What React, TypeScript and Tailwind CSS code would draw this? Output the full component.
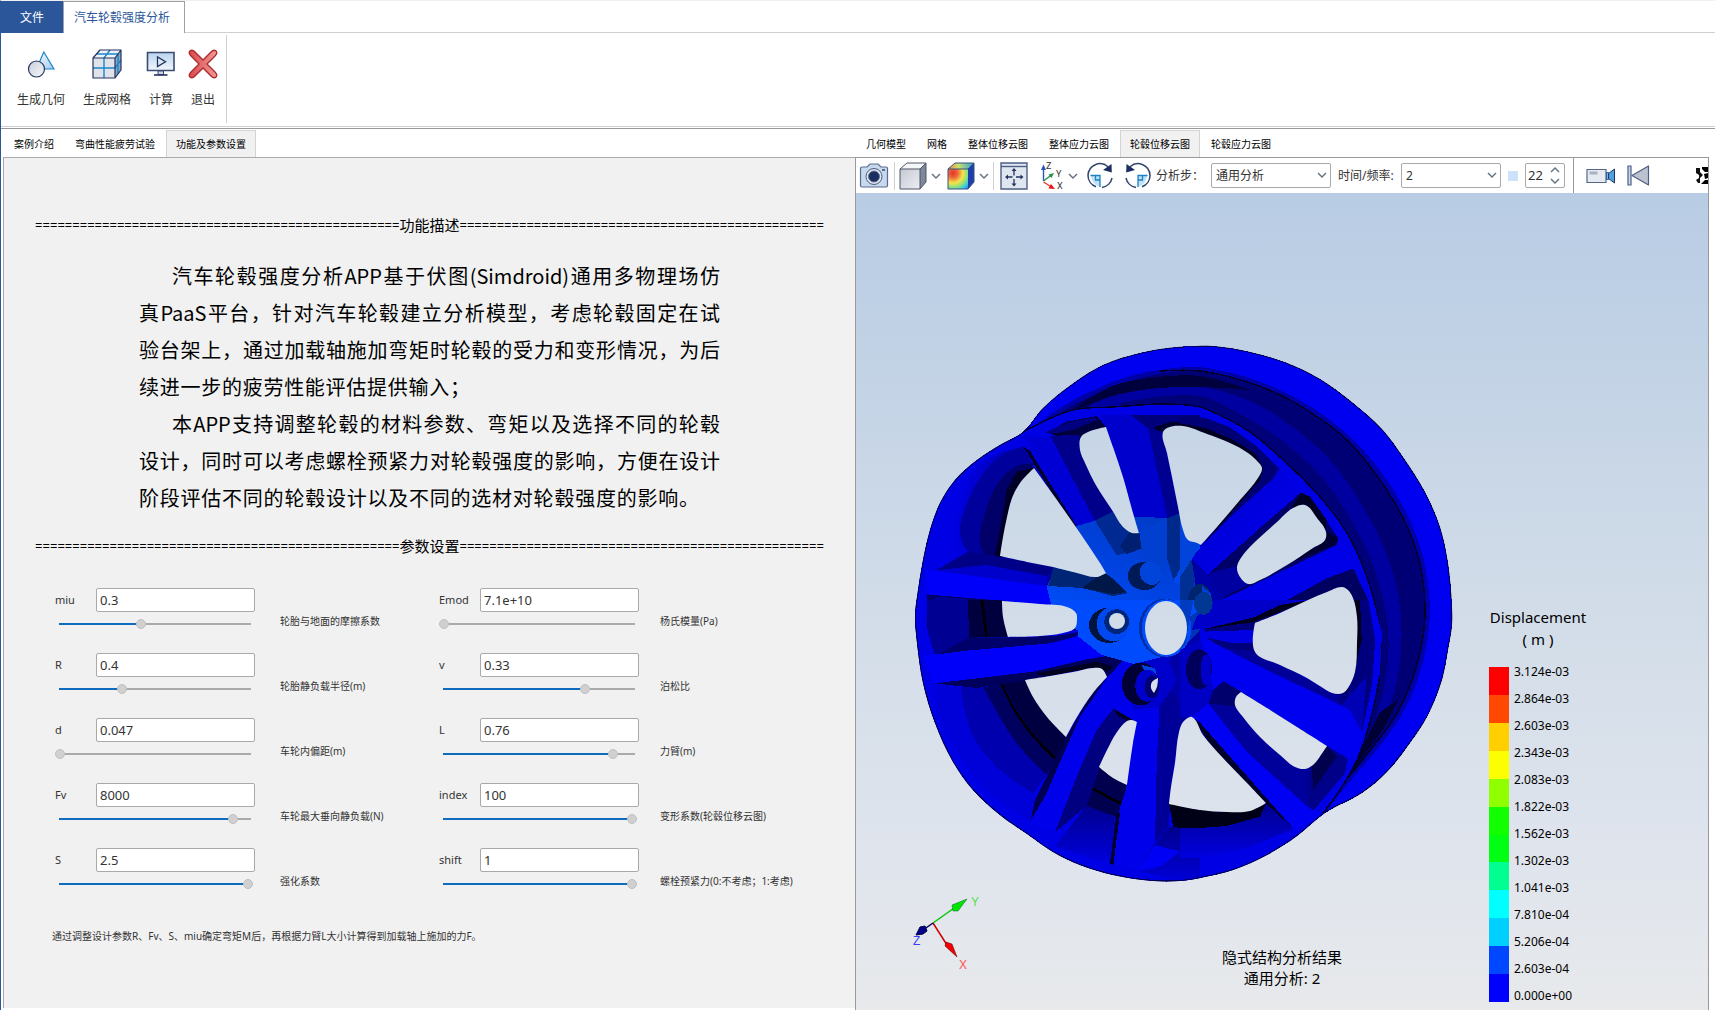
import { useState, type ReactNode } from "react";

/* ---------- ribbon icons ---------- */

function GeometryIcon() {
  return (
    <svg width="28" height="28" viewBox="0 0 28 28" aria-hidden="true">
      <defs>
        <linearGradient id="geo-tri" x1="0" y1="0" x2="1" y2="1">
          <stop offset="0" stopColor="#ffffff" />
          <stop offset="1" stopColor="#9ecbf0" />
        </linearGradient>
        <linearGradient id="geo-circle" x1="0" y1="0" x2="1" y2="1">
          <stop offset="0" stopColor="#c9ced8" />
          <stop offset="1" stopColor="#f6f7fa" />
        </linearGradient>
      </defs>
      <path d="M16.8 2 27 19H9.500Z" fill="url(#geo-tri)" stroke="#1b82c6" strokeWidth="1.2" />
      <circle cx="9.500" cy="19" r="8" fill="url(#geo-circle)" stroke="#25345e" strokeWidth="1.200" />
    </svg>
  );
}

function MeshIcon() {
  return (
    <svg width="30" height="30" viewBox="0 0 30 30" aria-hidden="true">
      <path d="M1 9 8 1h21l-6 8Z" fill="#eef3f9" />
      <path d="m23 9 6-8v20l-6 8Z" fill="#8aa4c4" />
      <path d="M1 9h22v20H1Z" fill="#dfe2e8" />
      <path d="M12 29V9l6-8M1 19h22l6-8M4.500 5H26M26 5v20" fill="none" stroke="#1b86cc" strokeWidth="1.400" />
      <path d="M1 9 8 1h21v20l-6 8H1Z M1 9h22v20M23 9l6-8" fill="none" stroke="#25345e" strokeWidth="1.200" strokeLinejoin="round" />
    </svg>
  );
}

function ComputeIcon() {
  return (
    <svg width="30" height="26" viewBox="0 0 30 26" aria-hidden="true">
      <defs>
        <linearGradient id="screen" x1="0" y1="0" x2="0" y2="1">
          <stop offset="0" stopColor="#b9d3ee" />
          <stop offset="1" stopColor="#f2f7fc" />
        </linearGradient>
      </defs>
      <path d="M1.500 1.500h26.500v18H1.500Z" fill="url(#screen)" stroke="#3a4a72" strokeWidth="1.600" />
      <path d="M12 20h5.500v3.500H12Z" fill="#c9d3e2" stroke="#3a4a72" />
      <path d="M8 24h13.500" stroke="#25345e" strokeWidth="1.600" />
      <path d="M11.500 6v9.500l8-4.700Z" fill="#dbeafa" stroke="#25345e" strokeWidth="1.300" />
    </svg>
  );
}

function ExitIcon() {
  return (
    <svg width="30" height="30" viewBox="0 0 30 30" aria-hidden="true">
      <defs>
        <linearGradient id="cross" x1="0" y1="0" x2="1" y2="0">
          <stop offset="0" stopColor="#d84a4c" />
          <stop offset="1" stopColor="#f19a98" />
        </linearGradient>
      </defs>
      <path
        d="M2 2Q4 0 7 3L15 11 23 3Q26 0 28 2T27 7L19 15 27 23Q30 26 28 28T23 27L15 19 7 27Q4 30 2 28T3 23L11 15 3 7Q0 4 2 2Z"
        fill="url(#cross)"
        stroke="#b0282d"
        strokeWidth="1.300"
      />
    </svg>
  );
}

/* ---------- viewer toolbar icons ---------- */

function CameraIcon() {
  return (
    <svg width="30" height="26" viewBox="0 0 30 26" aria-hidden="true">
      <path d="M1.500 5.500Q1.500 4 3 4h5l3-3h8l3 3h5q1.500 0 1.500 1.500v17q0 1.500-1.500 1.500H3q-1.500 0-1.500-1.500Z" fill="#c6d9ef" stroke="#5a6c8e" strokeWidth="1.200" />
      <circle cx="15" cy="13.500" r="8" fill="#e3e8ef" stroke="#4a5a7e" />
      <circle cx="15" cy="13.500" r="5.500" fill="#1a2f5f" stroke="#5c7294" />
      <path d="M23 7h3" stroke="#33476f" strokeWidth="1.500" />
    </svg>
  );
}

function CubeIcon() {
  return (
    <svg width="28" height="28" viewBox="0 0 28 28" aria-hidden="true">
      <defs>
        <linearGradient id="cube-face" x1="0" y1="0" x2="1" y2="1">
          <stop offset="0" stopColor="#c5c9d1" />
          <stop offset="1" stopColor="#eceef2" />
        </linearGradient>
      </defs>
      <path d="m1 7 7-6h19l-6 6Z" fill="#f5f6f8" />
      <path d="m21 7 6-6v19l-6 7Z" fill="#7f8899" />
      <path d="M1 7h20v20H1Z" fill="url(#cube-face)" />
      <path d="m1 7 7-6h19v19l-6 7H1Zh20v20M21 7l6-6" fill="none" stroke="#4c5568" strokeLinejoin="round" />
    </svg>
  );
}

function ContourCubeIcon() {
  return (
    <svg width="28" height="28" viewBox="0 0 28 28" aria-hidden="true">
      <defs>
        <radialGradient id="contour" gradientUnits="userSpaceOnUse" cx="6" cy="11" r="22">
          <stop offset="0" stopColor="#e0332c" />
          <stop offset="0.22" stopColor="#ee6a3a" />
          <stop offset="0.45" stopColor="#f7e24a" />
          <stop offset="0.65" stopColor="#8fe27a" />
          <stop offset="0.82" stopColor="#35c9e8" />
          <stop offset="1" stopColor="#2a74e0" />
        </radialGradient>
        <linearGradient id="contour-top" x1="0" y1="0" x2="1" y2="0">
          <stop offset="0" stopColor="#e8863e" />
          <stop offset="0.4" stopColor="#c9e26a" />
          <stop offset="1" stopColor="#2a9be0" />
        </linearGradient>
      </defs>
      <path d="m1 7 7-6h19l-6 6Z" fill="url(#contour-top)" />
      <path d="m21 7 6-6v19l-6 7Z" fill="#1d3fae" />
      <path d="M1 7h20v20H1Z" fill="url(#contour)" />
      <path d="m1 7 7-6h19v19l-6 7H1Zh20M21 7l6-6" fill="none" stroke="#39507e" strokeLinejoin="round" />
    </svg>
  );
}

function FitIcon() {
  return (
    <svg width="28" height="28" viewBox="0 0 28 28" aria-hidden="true">
      <path d="M1 1h26v26H1Z" fill="#dfe6f0" stroke="#4d5f85" strokeWidth="1.400" />
      <path d="M1 4.500h26" stroke="#4d5f85" strokeWidth="1.400" />
      <path d="M14 13.500V8M14 17v6M12.500 15H7M16 15h6" stroke="#25345e" strokeWidth="1.300" />
      <path d="m14 6-2.500 3h5ZM14 24.500 11.500 21.500h5ZM5 15l3-2.500v5ZM23.500 15l-3-2.500v5Z" fill="#25345e" />
    </svg>
  );
}

function AxesIcon() {
  return (
    <svg width="24" height="28" viewBox="0 0 24 28" aria-hidden="true" fontFamily="Roboto, sans-serif" fontSize="9">
      <path d="M3.500 19V6" stroke="#2a56b8" strokeWidth="1.400" />
      <path d="M3.500 2.500 1 8h5Z" fill="#2a56b8" />
      <path d="m3.500 19 8-6" stroke="#2a9048" strokeWidth="1.400" />
      <path d="m14 11-5.500 1.500 3 3.500Z" fill="#2a9048" />
      <path d="m3.500 20 8 5" stroke="#e33" strokeWidth="1.400" />
      <path d="m15 27-6.500-.5 2.500-4.500Z" fill="#e11" />
      <text x="6" y="7" fill="#333">Z</text>
      <text x="16" y="15" fill="#333">Y</text>
      <text x="17" y="27" fill="#333">X</text>
    </svg>
  );
}

function RotateIcon({ flipped = false }: { flipped?: boolean }) {
  return (
    <svg width="28" height="28" viewBox="0 0 28 28" aria-hidden="true" className={flipped ? "-scale-x-100" : ""}>
      <path d="M5 13.500h9V25A12 12 0 0 1 5 13.500Z" fill="#bfe2f8" />
      <path d="M4.500 13.500H14V25" fill="none" stroke="#1b82c6" strokeWidth="1.300" />
      <path d="M9.500 13.500V18H14" fill="none" stroke="#1b82c6" strokeWidth="1.300" />
      <path d="M22 4.800A12 12 0 0 0 2 13.500a12 12 0 0 0 8 11.300M16 25.500a12 12 0 0 0 10-9.500" fill="none" stroke="#33456f" strokeWidth="1.500" />
      <path d="m25.500 2 .3 8.500-8.800-2.500Z" fill="#1a2f5f" />
    </svg>
  );
}

function RecordIcon() {
  return (
    <svg width="30" height="18" viewBox="0 0 30 18" aria-hidden="true">
      <path d="M1 2.500h19v13H1Z" fill="#e6eaf1" stroke="#55668c" strokeWidth="1.200" />
      <path d="M3.500 4.500h8v3h-8Z" fill="#a9b2c3" />
      <path d="M20.500 5.500h2v7h-2Z" fill="#7fb7e4" stroke="#3a5e98" />
      <path d="M22.500 6.500 28.500 2v14l-6-4.500Z" fill="#4da3e0" stroke="#25345e" />
    </svg>
  );
}

function FirstFrameIcon() {
  return (
    <svg width="23" height="21" viewBox="0 0 23 21" aria-hidden="true">
      <path d="M1 1h3v19H1Z" fill="#c4d8ee" stroke="#4f5f80" strokeWidth="1.200" />
      <path d="M21.500 1v19L5 10.500Z" fill="#bcc2cf" stroke="#4f5f80" strokeWidth="1.200" strokeLinejoin="round" />
    </svg>
  );
}

function Chevron({ up = false }: { up?: boolean }) {
  return (
    <svg width="10" height="6" viewBox="0 0 10 6" aria-hidden="true" className={up ? "rotate-180" : ""}>
      <path d="m1 1 4 4 4-4" fill="none" stroke="#62707c" strokeWidth="1.400" />
    </svg>
  );
}

/* ---------- wheel model ---------- */

/** Turns a list of "x y" pairs into a curve that keeps sharp corners sharp. */
function smooth(list: string, closed = true) {
  const n = list.trim().split(/\s+/).map(Number);
  const pts: [number, number][] = [];
  for (let i = 0; i + 1 < n.length; i += 2) pts.push([n[i], n[i + 1]]);
  const count = pts.length;
  const tangents = pts.map((p, i): [number, number] => {
    if (!closed && (i === 0 || i === count - 1)) return [0, 0];
    const a = pts[(i - 1 + count) % count];
    const b = pts[(i + 1) % count];
    const inLen = Math.hypot(p[0] - a[0], p[1] - a[1]) || 1;
    const outLen = Math.hypot(b[0] - p[0], b[1] - p[1]) || 1;
    const u = [(p[0] - a[0]) / inLen, (p[1] - a[1]) / inLen];
    const v = [(b[0] - p[0]) / outLen, (b[1] - p[1]) / outLen];
    if (u[0] * v[0] + u[1] * v[1] < 0.45) return [0, 0];
    const s = Math.hypot(u[0] + v[0], u[1] + v[1]);
    return [(u[0] + v[0]) / s, (u[1] + v[1]) / s];
  });
  let d = `M${pts[0][0]} ${pts[0][1]}`;
  for (let i = 0; i < (closed ? count : count - 1); i++) {
    const j = (i + 1) % count;
    const [p, q, s, t] = [pts[i], pts[j], tangents[i], tangents[j]];
    const k = Math.hypot(q[0] - p[0], q[1] - p[1]) / 3;
    d += `C${p[0] + s[0] * k} ${p[1] + s[1] * k} ${q[0] - t[0] * k} ${q[1] - t[1] * k} ${q[0]} ${q[1]}`;
  }
  return closed ? `${d}Z` : d;
}

const HOLES = [
  "1034 468 1020 483 1012 498 1007 517 1003 537 1000 556 1027 562 1053 567 1077 573 1097 577 1106 573 1100 563 1080 533 1057 500",
  "1106 427 1088 432 1081 437 1080 450 1085 463 1097 487 1112 510 1123 527 1132 533 1139 533 1133 513 1123 477 1113 447",
  "1163 432 1167 428 1183 426 1207 434 1230 443 1248 453 1258 462 1262 468 1258 478 1240 500 1217 527 1201 545 1197 543 1188 540 1183 530 1178 507 1172 477 1167 453",
  "1305 505 1293 508 1277 522 1257 540 1243 555 1237 567 1240 577 1248 584 1260 580 1287 565 1313 548 1325 540 1326 532 1317 518",
  "1342 587 1327 592 1308 600 1280 613 1255 623 1255 652 1280 665 1307 678 1323 688 1332 693 1343 693 1348 688 1355 672 1357 643 1357 617 1353 598 1348 590",
  "1241 692 1236 697 1235 705 1243 717 1260 737 1280 755 1295 767 1305 769 1313 765 1323 752 1327 746 1297 727 1267 708",
  "1190 717 1183 722 1179 732 1175 763 1171 787 1169 804 1200 810 1227 812 1250 811 1266 803 1247 783 1223 758 1203 735 1192 717",
  "1137 722 1132 720 1127 721 1117 732 1107 750 1099 767 1113 778 1127 785 1133 743",
  "1025 680 1033 697 1047 717 1066 737 1077 717 1093 693 1107 677 1102 669 1093 668 1073 672 1050 676",
  "1002 601 1003 617 1008 637 1040 636 1063 633 1075 628 1077 620 1076 613 1067 607 1040 604",
  "1152 682 1158 678 1157 687 1154 693 1151 688",
].map((list) => smooth(list));

const SILHOUETTE = smooth(
  "1023 432 1043 408 1075 382 1103 365 1140 353 1177 347 1213 346 1250 352 1287 363 1320 379 1353 403 1382 429 1403 457 1425 492 1440 527 1448 563 1452 607 1452 625 1448 650 1442 680 1427 717 1410 743 1387 772 1362 793 1325 813 1297 836 1267 855 1233 870 1200 878 1180 881 1153 881 1113 875 1080 865 1053 852 1027 834 1000 815 973 790 953 762 935 723 923 683 917 643 915 615 917 597 923 560 930 530 940 503 955 480 977 460 1000 445",
);

const FRONT_EDGE =
  "1023 432 1073 410 1113 407 1167 404 1200 407 1213 412 1247 430 1280 457 1320 497 1347 533 1367 577 1379 623 1381 660 1373 710 1357 760 1340 790 1323 813";

const P = ({ d, f }: { d: string; f: string }) => <path d={d} fill={f} />;
const Band = ({ pts, f }: { pts: string; f: string }) => <path d={smooth(pts)} fill={f} />;

function Wheel() {
  return (
    <svg
      className="absolute inset-0 h-full w-full"
      viewBox="856 193 852 817"
      preserveAspectRatio="xMidYMid meet"
      role="img"
      aria-label="轮毂位移云图"
    >
      <defs>
        <mask id="openings" maskUnits="userSpaceOnUse" x="900" y="330" width="570" height="570">
          <rect x="900" y="330" width="570" height="570" fill="white" />
          {HOLES.map((d) => (
            <path key={d} d={d} fill="black" />
          ))}
          <ellipse cx="1166" cy="628" rx="21" ry="27" fill="black" />
          <circle cx="1117" cy="621" r="8" fill="black" />
        </mask>
        <clipPath id="outline">
          <path d={SILHOUETTE} />
        </clipPath>
        <linearGradient id="wall-left" x1="0" y1="0" x2="1" y2="0">
          <stop offset="0" stopColor="#0000ec" />
          <stop offset="0.6" stopColor="#0000aa" />
          <stop offset="1" stopColor="#000080" />
        </linearGradient>
        <linearGradient id="wall-bottom" x1="0" y1="0" x2="0" y2="1">
          <stop offset="0" stopColor="#00008c" />
          <stop offset="1" stopColor="#0000e0" />
        </linearGradient>
        <linearGradient id="spoke-shade" x1="0" y1="0" x2="1" y2="1">
          <stop offset="0" stopColor="#0000d0" />
          <stop offset="1" stopColor="#0000ee" />
        </linearGradient>
        <linearGradient id="hub" x1="0" y1="1" x2="0.6" y2="0">
          <stop offset="0" stopColor="#0050ff" />
          <stop offset="0.6" stopColor="#0042e0" />
          <stop offset="1" stopColor="#003cc8" />
        </linearGradient>
      </defs>

      <g mask="url(#openings)" shapeRendering="crispEdges">
        <path d={SILHOUETTE} fill="#0000f0" />
        <g clipPath="url(#outline)">
          {/* rear rim and barrel */}
          <Band
            pts="1033 427 1060 408 1087 393 1133 375 1165 369 1200 367 1213 369 1247 377 1280 390 1313 408 1347 434 1380 470 1407 514 1424 560 1430 607 1427 643 1417 682 1400 718 1375 752 1347 785 1325 813 1180 640"
            f="#0000a8"
          />
          <Band
            pts="1043 425 1065 410 1087 398 1133 380 1165 373 1200 371 1213 374 1247 383 1280 396 1313 415 1347 441 1377 477 1403 519 1419 560 1425 607 1422 643 1412 680 1396 715 1372 748 1345 781 1323 811 1180 640"
            f="#000074"
          />
          <Band
            pts="1090 405 1120 393 1160 388 1200 387 1250 401 1290 425 1330 460 1362 505 1385 550 1399 600 1401 650 1392 700 1372 742 1340 788 1180 640"
            f="#0000a0"
          />
          <Band
            pts="1120 403 1200 396 1240 414 1285 443 1325 481 1354 525 1375 570 1387 620 1388 660 1378 712 1357 762 1180 640"
            f="#000078"
          />
          <Band pts="1070 412 1110 387 1150 378 1200 376 1250 390 1200 387 1160 388 1120 394" f="#00003c" />
          <P d="M1380 712 1398 700 1384 728 1345 782Z" f="#000034" />
          <path
            d={smooth(
              "1160 371 1200 371 1247 382 1280 395 1313 414 1347 440 1377 476 1403 518 1419 560 1425 607 1422 643 1412 680 1396 715 1372 748 1345 781",
              false,
            )}
            fill="none"
            stroke="#000028"
            strokeWidth="1.500"
          />

          {/* front face base */}
          <path
            d={smooth(`${FRONT_EDGE} 1297 840 1233 875 1180 890 1080 875 1000 825 940 750 910 640 910 590 925 530 950 475`)}
            fill="#0000e4"
          />
          <path d={smooth(FRONT_EDGE, false)} fill="none" stroke="#000030" strokeWidth="1.500" />

          {/* upper left quadrant */}
          <g transform="translate(900 330) scale(.33333)">
            <P d="M370 350 300 368 240 400 205 450 175 530 160 640 110 720 440 770 620 740 402 410Z" f="url(#wall-left)" />
            <Band pts="370 350 310 372 250 430 200 520 180 600 205 665 300 680 330 500 405 415" f="#00009c" />
            <Band pts="405 400 350 408 290 465 255 550 240 640 250 668 310 690 340 500" f="#000068" />
            <P d="M405 412 350 425 320 480 300 600 285 675 305 685 340 510Z" f="#000026" />
            <P d="M205 665 300 680 460 712 440 742 110 720Z" f="#000086" />
            <P d="M110 720 260 705 440 738 440 770Z" f="#0000cc" />
            <P d="M80 720 440 768 455 828 300 810 80 793Z" f="#0000fa" />
            <P d="M80 793 300 812 455 830 530 842 535 900H80Z" f="#00006c" />
            <P d="M105 800 200 806V900H80Z" f="#000096" />
            <P d="M250 812 305 816 330 900H250Z" f="#000034" />
            <P d="M440 308 500 275 590 258 620 292 565 305 542 325 560 350Z" f="#00003c" />
            <P d="M440 305 500 278 580 262 595 268 520 300 450 312Z" f="#000080" />
            <P d="M450 318 540 314 540 362 590 470 640 547 585 574Z" f="#00008a" />
            <P d="M372 318 445 322 585 572 530 590Z" f="#0000d4" />
            <P d="m370 350 20 12L618 730l-14-2Z" f="#000030" />
            <P d="M600 256 690 256 760 310 802 564 704 560 618 290Z" f="#0000cc" />
            <P d="M690 254H900V300L850 288 800 296 790 315 750 300Z" f="#00007c" />
            <P d="M760 292 810 275 900 282V300L850 290 800 298 790 320Z" f="#000030" />
            <P d="M745 300 790 305 800 370 838 552 802 564Z" f="#000090" />

            {/* displaced hub zone */}
            <P d="M440 770 530 588 585 572 704 560 802 564 837 550 900 640V900H530L455 828Z" f="url(#hub)" />
            <P d="M585 572 638 545 695 608 718 608 730 655 650 676Z" f="#002a92" />
            <P d="M690 605 720 608 728 655 680 672 660 650Z" f="#001f70" />
            <P d="M802 564 837 550 868 630 850 690 822 755 800 680Z" f="#00298c" />
            <P d="M718 608 802 564 800 690 785 740 730 690Z" f="#003fcf" />
            <P d="M460 712 590 742 618 730 650 755 682 790 640 798 545 774 445 768Z" f="#002574" />
            <P d="M590 742 618 730 680 785 640 792 545 774Z" f="#001748" />
            <ellipse cx="733" cy="738" rx="50" ry="42" fill="#001a58" />
            <ellipse cx="752" cy="730" rx="32" ry="36" transform="rotate(-35 752 730)" fill="#0044da" />
            <P d="M820 750 900 640 900 680 830 765Z" f="#0048ee" />
            <P d="M870 690 900 655V770L880 745Z" f="#000088" />
          </g>

          {/* upper right quadrant */}
          <g transform="translate(1180 330) scale(.33333)">
            <P d="M0 254 80 265 150 292 225 345 298 415 282 448 190 560 60 650 245 440 235 395 150 340 0 290Z" f="#000074" />
            <P d="M0 280 80 295 160 330 225 370 250 415 240 450 65 650 245 420 220 380 80 312 0 290Z" f="#000020" />
            <P d="M298 415 362 490 250 585 85 728 40 700 35 680 150 562 280 445Z" f="url(#spoke-shade)" />
            <P d="M362 488 390 500 475 625 470 645 330 712 130 808 85 732 250 585Z" f="#000068" />
            <P d="M362 488 390 500 440 570 437 600 375 522 330 535 350 510Z" f="#000024" />
            <P d="M85 730 170 708 205 765 150 790 130 805Z" f="#0000a0" />
            <P d="M435 600 475 625 465 645 330 700 215 765 435 632Z" f="#000034" />
            <P d="M475 645 520 716 440 752 330 815 228 868 90 890 30 880 60 840 130 808 330 715Z" f="#0000e8" />
            <P d="M520 716 560 800 590 900H520L505 785 485 772 385 812 225 880 100 888 228 862 340 800 440 745Z" f="#000060" />
            <P d="M485 768 510 785 530 850V900H520L515 810Z" f="#000014" />
            <P d="M40 690 90 740 130 805 90 860 100 890 40 900 20 870 60 820 45 760Z" f="#0000a8" />
            <P d="M0 565 25 630 60 645 35 690 0 735Z" f="#0044dc" />
            <P d="M0 740 35 690 45 750 30 860 22 900H0Z" f="#003094" />
            <ellipse cx="60" cy="812" rx="36" ry="50" fill="#00246e" />
            <P d="M66 766 92 790 95 835 75 858 62 850Z" f="#0040cc" />
          </g>

          {/* lower left quadrant */}
          <g transform="translate(900 600) scale(.33333)">
            <P d="M80 0H305L325 112 535 108 450 135 105 168 85 100Z" f="#000092" />
            <P d="M203 0H305L325 112H208Z" f="#00003e" />
            <P d="M242 0h8l14 112h-8Z" f="#000000" />
            <P d="M208 112 325 114 480 106 535 96 530 115 450 132 105 168Z" f="#00006a" />
            <Band pts="105 250 180 265 400 585 395 665 280 590 180 470 110 330" f="#0000d8" />
            <Band pts="182 262 250 265 440 525 400 580 300 510 215 400" f="#0000ae" />
            <Band pts="250 262 375 240 500 412 470 480 440 525 350 430" f="#00005e" />
            <Band pts="310 250 375 240 500 412 465 475 380 375" f="#000040" />
            <path d="M305 250Q350 370 465 475" fill="none" stroke="#000" strokeWidth="7" />
            <P d="M70 168 200 152 450 130 535 108 605 165 560 182 400 218 200 248 100 248Z" f="#0000fa" />
            <P d="M105 250 400 215 560 178 660 162 665 185 622 234 605 208 580 203 450 228 375 242 230 264Z" f="#00005c" />
            <P d="M400 222 590 185 640 200 620 215 580 203 450 228Z" f="#000020" />
            <P d="M560 615 670 650 640 795 465 740Z" f="url(#wall-bottom)" />
            <P d="M597 500 680 555 660 655 555 615Z" f="#00004e" />
            <path d="M570 562 665 612" stroke="#000" strokeWidth="8" />
            <P d="M640 322 712 360 650 395 600 500 560 618 465 697 530 530 590 390Z" f="#000080" />
            <P d="M640 322 712 360 680 362 650 345Z" f="#000028" />
            <P d="M622 232 580 270 500 410 405 600 390 668 430 600 560 340Z" f="#000052" />
            <P d="M622 232 680 180 705 320 640 325 590 390 530 530 465 697 388 668 435 590 540 350Z" f="#0000ea" />
            <P d="M640 325 780 290 775 500 765 720 715 812 640 790 655 640 682 555 712 368Z" f="#0000ea" />
            <P d="M640 795 660 640 650 640 630 790Z" f="#000030" />
            <P d="M780 290 800 245 872 350 838 395 812 560 807 680 765 725 770 500Z" f="#000098" />
            <P d="M765 730 808 680 900 685V860L715 812Z" f="url(#wall-bottom)" />
            <P d="M807 608 900 628V685L820 682Z" f="#000018" />
            <P d="M765 735 715 812 780 800 840 755Z" f="#0000f4" />

            <P d="M450 0H900V60L862 80 850 140 800 168 760 190 700 192 660 180 605 165 535 110 530 30Z" f="#004cfc" />
            <P d="M870 50 900 30V160H850Z" f="#0034b8" />
            <P d="M862 130 900 90V350L870 350 800 250 810 170Z" f="#0000a8" />
            <P d="M700 192 800 168 830 240 800 290 780 320 700 330Z" f="#0000cc" />
            <ellipse cx="627" cy="76" rx="60" ry="53" fill="#001440" />
            <ellipse cx="640" cy="72" rx="50" ry="52" fill="#0048f0" />
            <circle cx="650" cy="65" r="37" fill="#00267c" />
            <ellipse cx="795" cy="84" rx="78" ry="88" fill="#0030a8" />
            <ellipse cx="800" cy="84" rx="74" ry="86" fill="#004cfc" />
            <ellipse cx="722" cy="252" rx="56" ry="64" fill="#000034" />
            <P d="M725 195 765 205 770 225 735 215Z" f="#0044e0" />
            <ellipse cx="742" cy="257" rx="36" ry="48" fill="#0000cc" />
            <ellipse cx="756" cy="260" rx="22" ry="34" fill="#000070" />
          </g>

          {/* lower right quadrant */}
          <g transform="translate(1180 600) scale(.33333)">
            <P d="M525 0H568L600 100 588 230 545 400 510 335 480 325 380 292 250 212 100 145 110 120 222 155 300 195 430 262 480 280 505 265 522 215 532 100Z" f="#00007e" />
            <P d="M525 0H540L545 120 520 230 500 275 480 280 505 262 520 215 530 100Z" f="#000018" />
            <P d="M222 152 300 192 430 262 480 282 480 325 380 290 250 212 110 140Z" f="#000098" />
            <P d="M565 0 580 0 606 100 600 220 570 340 545 402 575 260 586 120Z" f="#0000e8" />
            <P d="M545 402 510 335 480 322 505 290 560 230Z" f="#0000b4" />
            <P d="M75 85 225 68V155L130 145 75 110Z" f="#00007c" />
            <P d="M70 95 220 90 222 130 150 128 75 112Z" f="#0000e2" />
            <P d="M35 90 100 80 225 66 385 0H100L50 50Z" f="#0000c8" />
            <P d="M70 88 222 66 390 0 300 15 222 52Z" f="#00001c" />
            <P d="M75 115 250 205 440 295 510 330 548 400 530 480 500 472 440 437 183 275 135 242 85 270Z" f="#0000f0" />
            <P d="M130 243 185 275 440 437 502 475 495 520 400 632 385 622 250 520 85 310 95 275Z" f="#00009a" />
            <P d="M85 310 95 275 130 245 183 275 166 290 168 320Z" f="#00006c" />
            <P d="M440 437 502 475 495 520 400 632 385 600 385 505 410 485Z" f="#000088" />
            <P d="M440 437 470 470 400 570 395 500Z" f="#00004c" />
            <P d="M35 350 85 312 200 455 385 622 400 632 430 645 350 690 340 686 250 600 130 475Z" f="#0000f2" />
            <P d="M35 350 60 368 340 686 310 672 240 610 120 480Z" f="#00002c" />
            <P d="M258 610 340 686 200 745 60 775 0 775V630Z" f="url(#wall-bottom)" />
            <P d="M0 618 60 630 140 637 210 632 258 612 240 650 140 678 60 684H0Z" f="#000016" />
            <P d="M0 150 60 120 100 270 85 310 35 350 0 350Z" f="#0000c4" />
            <ellipse cx="57" cy="208" rx="39" ry="60" fill="#00005c" />
            <ellipse cx="78" cy="210" rx="16" ry="46" fill="#0000c8" />
            <P d="M0 0H40L22 95 18 130 0 150Z" f="#003cc0" />
            <ellipse cx="70" cy="10" rx="28" ry="34" fill="#003894" />
          </g>
          <path d={SILHOUETTE} fill="none" stroke="#000050" strokeWidth="2" />
        </g>
      </g>

      {/* coordinate triad */}
      <g fontFamily="Liberation Sans, Arial, sans-serif" fontSize="12">
        <path d="m933 923 24-17" stroke="#00c800" strokeWidth="1.500" />
        <path d="m967 899-15 6 1 6 5 0Z" fill="#00e400" stroke="#063" strokeWidth=".5" />
        <path d="m933 923 14 22" stroke="#d00000" strokeWidth="1.500" />
        <path d="m957 957-12-11 1-4 6 2Z" fill="#f00000" stroke="#500" strokeWidth=".5" />
        <path d="m933 923-10 7" stroke="#000060" strokeWidth="1.500" />
        <path d="m916 935 4-8 5-1 2 5-4 3Z" fill="#00008c" stroke="#000040" />
        <text x="971" y="906" fill="#4ee24e">Y</text>
        <text x="959" y="969" fill="#ff5050">X</text>
        <text x="913" y="945" fill="#3c3cff">Z</text>
      </g>
    </svg>
  );
}

/* ---------- colour legend ---------- */

const BANDS = [
  "bg-[#ff0000]",
  "bg-[#ff4800]",
  "bg-[#ffcf00]",
  "bg-[#fbff00]",
  "bg-[#90ff00]",
  "bg-[#12ff00]",
  "bg-[#00ff12]",
  "bg-[#00ff90]",
  "bg-[#00ffff]",
  "bg-[#00cfff]",
  "bg-[#0048ff]",
  "bg-[#0000ff]",
];

const LEVELS = [
  "3.124e-03",
  "2.864e-03",
  "2.603e-03",
  "2.343e-03",
  "2.083e-03",
  "1.822e-03",
  "1.562e-03",
  "1.302e-03",
  "1.041e-03",
  "7.810e-04",
  "5.206e-04",
  "2.603e-04",
  "0.000e+00",
];

function Legend() {
  return (
    <div className="absolute right-[118px] bottom-px w-[104px] text-black">
      <div className="pb-2 text-center text-[15px] leading-[22px]">
        <div>Displacement</div>
        <div>( m )</div>
      </div>
      <div className="flex gap-[5px] pl-[3px]">
        <div className="mt-[9px] mb-[7px] flex w-5 flex-col">
          {BANDS.map((band) => (
            <div key={band} className={`flex-1 ${band}`} />
          ))}
        </div>
        <div className="text-[12px] leading-[27px]">
          {LEVELS.map((level) => (
            <div key={level}>{level}</div>
          ))}
        </div>
      </div>
    </div>
  );
}

/* ---------- parameter form ---------- */

type Param = { id: string; value: string; ratio: number; note: string };

const PARAMS: [Param, Param][] = [
  [
    { id: "miu", value: "0.3", ratio: 43, note: "轮胎与地面的摩擦系数" },
    { id: "Emod", value: "7.1e+10", ratio: 0, note: "杨氏模量(Pa)" },
  ],
  [
    { id: "R", value: "0.4", ratio: 33, note: "轮胎静负载半径(m)" },
    { id: "v", value: "0.33", ratio: 75, note: "泊松比" },
  ],
  [
    { id: "d", value: "0.047", ratio: 0, note: "车轮内偏距(m)" },
    { id: "L", value: "0.76", ratio: 90, note: "力臂(m)" },
  ],
  [
    { id: "Fv", value: "8000", ratio: 92, note: "车轮最大垂向静负载(N)" },
    { id: "index", value: "100", ratio: 100, note: "变形系数(轮毂位移云图)" },
  ],
  [
    { id: "S", value: "2.5", ratio: 100, note: "强化系数" },
    { id: "shift", value: "1", ratio: 100, note: "螺栓预紧力(0:不考虑；1:考虑)" },
  ],
];

function ParamField({ id, value, ratio, note, gap }: Param & { gap: string }) {
  const [pos, setPos] = useState(ratio);
  return (
    <div className={`flex h-[65px] ${gap}`}>
      <div className="w-[200px] shrink-0">
        <div className="flex items-center">
          <label htmlFor={id} className="w-[41px] text-[11px]">
            {id}
          </label>
          <input
            id={id}
            defaultValue={value}
            className="h-6 w-[159px] rounded-[2px] border border-[#a9a9a9] bg-white px-[3px] text-[13px] text-[#333] outline-none"
          />
        </div>
        <input
          type="range"
          aria-label={note}
          value={pos}
          onChange={(e) => setPos(Number(e.target.value))}
          className="mt-[7px] block h-[10px] w-[198px] appearance-none [&::-webkit-slider-thumb]:size-[10px] [&::-webkit-slider-thumb]:appearance-none [&::-webkit-slider-thumb]:rounded-full [&::-webkit-slider-thumb]:border [&::-webkit-slider-thumb]:border-[#c0c0c0] [&::-webkit-slider-thumb]:bg-[#d0d0d0]"
          style={{
            background: `linear-gradient(to right, transparent 4px, #0f6cbd 4px, #0f6cbd ${5 + (pos * 188) / 100}px, #aaaaaa ${5 + (pos * 188) / 100}px, #aaaaaa 196px, transparent 196px) center / 100% 2px no-repeat`,
          }}
        />
      </div>
      <span className="mt-[25px] text-[10px] leading-4 whitespace-nowrap">{note}</span>
    </div>
  );
}

function SectionTitle({ children }: { children: ReactNode }) {
  const rule = "=".repeat(49);
  return (
    <h2 className="flex h-5 items-center justify-center overflow-hidden text-[15px] leading-5 text-black">
      <span className="text-[13px]">{rule}</span>
      {children}
      <span className="text-[13px]">{rule}</span>
    </h2>
  );
}

const DESCRIPTION = [
  {
    lines: [
      "汽车轮毂强度分析APP基于伏图(Simdroid)通用多物理场仿",
      "真PaaS平台，针对汽车轮毂建立分析模型，考虑轮毂固定在试",
      "验台架上，通过加载轴施加弯矩时轮毂的受力和变形情况，为后",
      "续进一步的疲劳性能评估提供输入；",
    ],
    lastWidth: "w-[331px]",
  },
  {
    lines: [
      "本APP支持调整轮毂的材料参数、弯矩以及选择不同的轮毂",
      "设计，同时可以考虑螺栓预紧力对轮毂强度的影响，方便在设计",
      "阶段评估不同的轮毂设计以及不同的选材对轮毂强度的影响。",
    ],
    lastWidth: "w-[560px]",
  },
];

function TabStrip({ tabs, active }: { tabs: string[]; active: string }) {
  return (
    <div role="tablist" className="flex h-[27px] shrink-0 gap-px bg-white pl-px text-[10px] text-black">
      {tabs.map((tab) => (
        <button
          key={tab}
          type="button"
          role="tab"
          aria-selected={tab === active}
          className={
            tab === active
              ? "h-[27px] border border-b-0 border-[#d4d4d4] bg-[#f1f1f1] px-[9px] pt-px"
              : "h-[27px] px-[10px] pt-[2px]"
          }
        >
          {tab}
        </button>
      ))}
    </div>
  );
}

function ToolButton({ label, children, className = "" }: { label: string; children: ReactNode; className?: string }) {
  return (
    <button type="button" aria-label={label} className={`flex shrink-0 items-center justify-center ${className}`}>
      {children}
    </button>
  );
}

function Select({ id, options, className }: { id: string; options: string[]; className: string }) {
  return (
    <div className={`relative shrink-0 ${className}`}>
      <select
        id={id}
        className="h-[25px] w-full appearance-none rounded-[2px] border border-[#a9a9a9] bg-white pl-1 text-[12px] text-[#333] outline-none"
      >
        {options.map((option) => (
          <option key={option}>{option}</option>
        ))}
      </select>
      <span className="pointer-events-none absolute top-[9px] right-[4px]">
        <Chevron />
      </span>
    </div>
  );
}

const RIBBON = [
  { label: "生成几何", icon: <GeometryIcon />, width: "w-[66px]" },
  { label: "生成网格", icon: <MeshIcon />, width: "w-[66px]" },
  { label: "计算", icon: <ComputeIcon />, width: "w-[42px]" },
  { label: "退出", icon: <ExitIcon />, width: "w-[42px]" },
];

export default function App() {
  return (
    <div className="flex min-h-screen flex-col border-t border-l border-t-[#f0f0f0] border-l-[#2b579a] bg-white font-['Noto_Sans','Noto_Sans_CJK_SC',sans-serif] text-[#333]">
      <header>
        <div className="flex h-8 border-b border-[#d0d0d0] text-[12px]">
          <button type="button" className="h-8 w-[62px] bg-[#2b579a] pt-px text-white">
            文件
          </button>
          <button type="button" className="h-8 w-[122px] border-x border-t border-[#a0a0a0] bg-white pr-1 text-[#2b579a]">
            汽车轮毂强度分析
          </button>
        </div>
        <div className="flex h-[93px] pt-[2px]">
          <div className="flex h-[88px] items-start border-r border-[#d0d0d0] pr-[2px] pl-[7px]">
            {RIBBON.map(({ label, icon, width }) => (
              <button key={label} type="button" className={`flex flex-col items-center gap-[11px] pt-[14px] text-[12px] leading-5 ${width}`}>
                <span className="flex h-[30px] items-center">{icon}</span>
                {label}
              </button>
            ))}
          </div>
        </div>
        <div className="h-[3px] border-t border-b border-t-[#d0d0d0] border-b-[#999]" />
      </header>

      <main className="grid flex-1 grid-cols-[427fr_430fr]">
        <section className="flex min-w-0 flex-col pt-px pl-[2px]">
          <TabStrip tabs={["案例介绍", "弯曲性能疲劳试验", "功能及参数设置"]} active="功能及参数设置" />
          <div className="mb-[2px] flex-1 border-t border-l border-[#aaa] bg-[#f1f1f1] pt-[57px]">
            <SectionTitle>功能描述</SectionTitle>
            <div className="mx-auto mt-[22px] w-[581px] font-['Noto_Sans_CJK_SC',sans-serif] text-[20px] leading-[37px] text-black">
              {DESCRIPTION.map(({ lines, lastWidth }) => (
                <p key={lastWidth}>
                  {lines.map((line, i) => (
                    <span
                      key={line}
                      className={`block whitespace-nowrap [text-align-last:justify] ${i === 0 ? "pl-[33px]" : ""} ${i === lines.length - 1 ? lastWidth : ""}`}
                    >
                      {line}
                    </span>
                  ))}
                </p>
              ))}
            </div>
            <div className="mt-5">
              <SectionTitle>参数设置</SectionTitle>
            </div>
            <form className="mt-8 pl-[51px]">
              {PARAMS.map(([left, right]) => (
                <div key={left.id} className="grid grid-cols-[384px_1fr]">
                  <ParamField {...left} gap="gap-[25px]" />
                  <ParamField {...right} gap="gap-[21px]" />
                </div>
              ))}
            </form>
            <p className="mt-[15px] pl-12 text-[10px] leading-4">
              通过调整设计参数R、Fv、S、miu确定弯矩M后，再根据力臂L大小计算得到加载轴上施加的力F。
            </p>
          </div>
        </section>

        <section className="flex min-w-0 flex-col pt-px pr-[6px]">
          <TabStrip
            tabs={["几何模型", "网格", "整体位移云图", "整体应力云图", "轮毂位移云图", "轮毂应力云图"]}
            active="轮毂位移云图"
          />
          <div className="flex min-h-0 flex-1 flex-col border-t border-r border-l border-[#999]">
            <div className="flex h-[35px] shrink-0 items-center overflow-hidden text-[12px]">
              <ToolButton label="截图" className="ml-[3px]">
                <CameraIcon />
              </ToolButton>
              <span className="ml-[5px] h-7 w-px shrink-0 bg-[#d0d0d0]" />
              <ToolButton label="显示模式" className="ml-[4px] gap-[4px]">
                <CubeIcon />
                <Chevron />
              </ToolButton>
              <ToolButton label="云图" className="ml-[6px] gap-[4px]">
                <ContourCubeIcon />
                <Chevron />
              </ToolButton>
              <span className="ml-[4px] h-7 w-px shrink-0 bg-[#d0d0d0]" />
              <ToolButton label="适应窗口" className="ml-[6px]">
                <FitIcon />
              </ToolButton>
              <ToolButton label="视图方向" className="ml-[12px] gap-[4px]">
                <AxesIcon />
                <Chevron />
              </ToolButton>
              <ToolButton label="顺时针旋转" className="ml-[8px]">
                <RotateIcon />
              </ToolButton>
              <ToolButton label="逆时针旋转" className="ml-[10px]">
                <RotateIcon flipped />
              </ToolButton>
              <label htmlFor="step" className="ml-[4px] w-[55px] shrink-0">
                分析步：
              </label>
              <Select id="step" options={["通用分析"]} className="w-[120px]" />
              <label htmlFor="time" className="ml-[7px] w-[63px] shrink-0 whitespace-nowrap">
                时间/频率:
              </label>
              <Select id="time" options={["2"]} className="w-[100px]" />
              <span className="ml-[7px] size-[10px] shrink-0 bg-[#cde1fb]" />
              <div className="ml-[7px] flex h-[25px] w-10 shrink-0 items-center rounded-[2px] border border-[#a9a9a9] bg-white">
                <input aria-label="帧" defaultValue="22" className="w-[24px] pl-[2px] text-[13px] outline-none" />
                <span className="flex flex-col gap-[5px]">
                  <button type="button" aria-label="增加">
                    <Chevron up />
                  </button>
                  <button type="button" aria-label="减少">
                    <Chevron />
                  </button>
                </span>
              </div>
              <span className="ml-[8px] h-full w-px shrink-0 bg-[#999]" />
              <ToolButton label="录制" className="ml-[12px]">
                <RecordIcon />
              </ToolButton>
              <ToolButton label="第一帧" className="ml-[11px]">
                <FirstFrameIcon />
              </ToolButton>
              <ToolButton label="更多" className="ml-auto">
                <svg width="12" height="18" viewBox="0 0 12 18" aria-hidden="true">
                  <path d="M0 1h4v4l3 3-3 3v5H2l-2-3 3-2V8L0 6Z" fill="#111" />
                  <path d="M6 0h6v5L9 5 6 2ZM5 17l4-4h3v4ZM8 7l4-1v5l-3 1Z" fill="#000" />
                </svg>
              </ToolButton>
            </div>
            <div className="relative flex-1 overflow-hidden bg-[linear-gradient(to_bottom,#b8cce4_0%,#d1dce8_50%,#dfe4ed_80%,#e7e9eb_100%)]">
              <Wheel />
              <Legend />
              <div className="absolute inset-x-0 bottom-[21px] text-center text-[15px] leading-[21px] whitespace-nowrap text-black">
                <div>隐式结构分析结果</div>
                <div>通用分析: 2</div>
              </div>
            </div>
          </div>
        </section>
      </main>
    </div>
  );
}
